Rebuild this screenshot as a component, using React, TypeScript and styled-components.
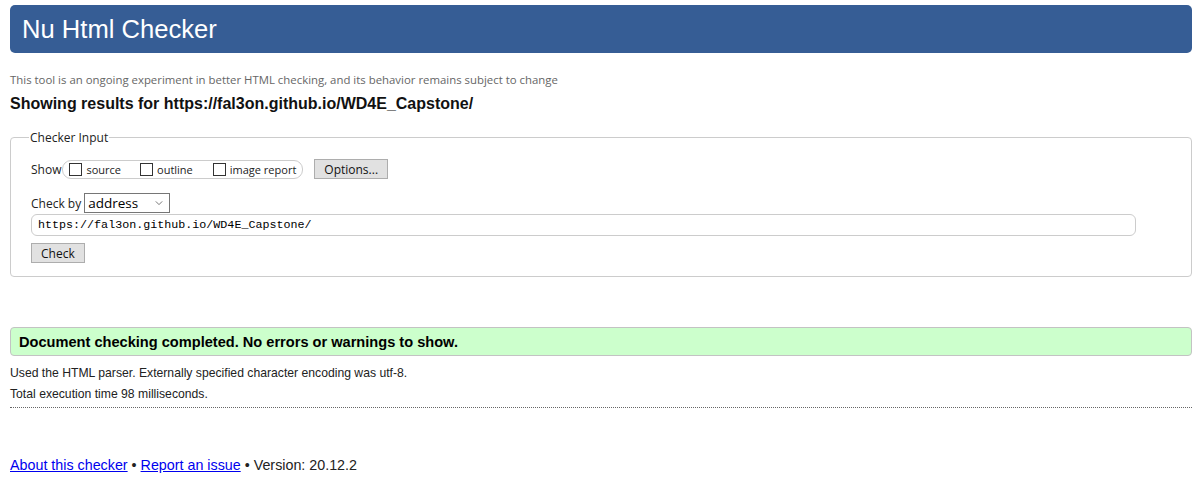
import React from 'react';
import styled, { createGlobalStyle } from 'styled-components';

const GlobalStyle = createGlobalStyle`
  html, body {
    margin: 0;
    padding: 0;
    background: #fff;
  }
  body {
    font-family: "Liberation Sans", Arial, sans-serif;
    color: #000;
  }
`;

const uiFont = `"Open Sans", "Noto Sans", sans-serif`;

const Page = styled.div`
  padding: 5px 10px 0;
`;

const Header = styled.h1`
  margin: 0;
  height: 48px;
  line-height: 48px;
  padding: 0 12px;
  background: #365d95;
  color: #fff;
  border-radius: 5px;
  font-family: "Liberation Sans", Arial, sans-serif;
  font-size: 25.6px;
  font-weight: normal;
`;

const Notice = styled.p`
  margin: 19px 0 0;
  font-family: ${uiFont};
  font-size: 11.4px;
  line-height: 15px;
  color: #666;
`;

const ResultsFor = styled.h2`
  margin: 8px 0 0;
  font-size: 16px;
  line-height: 18px;
  font-weight: bold;
  color: #111;
`;

const Fieldset = styled.fieldset`
  margin: 16px 0 0;
  padding: 8px 20px 13px;
  border: 1px solid #ccc;
  border-radius: 4px;
`;

const Legend = styled.legend`
  margin-left: -2px;
  padding: 0 1px;
  font-family: ${uiFont};
  font-size: 12px;
  color: #222;
`;

const Row = styled.div<{ $mt?: number }>`
  display: flex;
  align-items: center;
  margin-top: ${({ $mt }) => $mt ?? 0}px;
  font-family: ${uiFont};
  font-size: 12px;
  color: #222;
`;

const Pill = styled.div`
  display: flex;
  align-items: center;
  height: 17px;
  margin-left: 1px;
  padding: 0 6px 0 6px;
  border: 1px solid #ccc;
  border-radius: 9px;
`;

const Option = styled.label<{ $gap: number }>`
  display: flex;
  align-items: center;
  margin-right: ${({ $gap }) => $gap}px;
  font-size: 11px;
`;

const Box = styled.input.attrs({ type: 'checkbox' })`
  appearance: none;
  width: 13px;
  height: 13px;
  margin: 0 4px 0 0;
  border: 1px solid #333;
  background: #fff;
  box-sizing: border-box;
`;

const Button = styled.button<{ $ml?: number }>`
  height: 20px;
  margin-left: ${({ $ml }) => $ml ?? 0}px;
  padding: 0 9px;
  background: #e1e1e1;
  border: 1px solid #adadad;
  border-radius: 0;
  font-family: ${uiFont};
  font-size: 12px;
  color: #111;
  box-sizing: border-box;
`;

const SelectBox = styled.div`
  display: flex;
  align-items: center;
  width: 86px;
  height: 20px;
  margin-left: 3px;
  border: 1px solid #767676;
  box-sizing: border-box;
  background: #fff;
`;

const Select = styled.select`
  appearance: none;
  flex: 1;
  border: none;
  background: transparent;
  padding: 0 0 0 3px;
  font-family: ${uiFont};
  font-size: 13.5px;
  color: #000;
  outline: none;
`;

const UrlInput = styled.input`
  display: block;
  width: 1105px;
  height: 22px;
  margin-top: 1px;
  padding: 0 6px;
  border: 1px solid #ccc;
  border-radius: 6px;
  box-sizing: border-box;
  font-family: "Liberation Mono", "DejaVu Sans Mono", monospace;
  font-size: 11.7px;
  color: #000;
`;

const CheckButton = styled(Button)`
  display: block;
  margin-top: 7px;
`;

const Success = styled.p`
  margin: 50px 0 0;
  height: 29px;
  line-height: 29px;
  padding: 0 8px;
  background: #ccffcc;
  border: 1px solid #c3c3c3;
  border-radius: 4px;
  box-sizing: border-box;
  font-size: 14.6px;
  font-weight: bold;
  color: #000;
`;

const Detail = styled.p<{ $mt: number }>`
  margin: ${({ $mt }) => $mt}px 0 0;
  font-size: 12.2px;
  line-height: 14px;
  color: #222;
`;

const Rule = styled.hr`
  margin: 6px 0 0;
  border: none;
  border-top: 1px dotted #666;
`;

const Footer = styled.p`
  margin: 49px 0 0;
  font-size: 14.3px;
  line-height: 16px;
  color: #222;
`;

const Link = styled.a`
  color: #0000ee;
  text-decoration: underline;
`;

const Chevron = () => (
  <svg width="10" height="6" viewBox="0 0 10 6" style={{ marginRight: 6 }}>
    <path d="M1 1l4 4 4-4" fill="none" stroke="#555" strokeWidth="1" />
  </svg>
);

const App: React.FC = () => {
  const url = 'https://fal3on.github.io/WD4E_Capstone/';
  return (
    <Page>
      <GlobalStyle />
      <Header>Nu Html Checker</Header>
      <Notice>
        This tool is an ongoing experiment in better HTML checking, and its behavior remains subject to change
      </Notice>
      <ResultsFor>Showing results for {url}</ResultsFor>
      <Fieldset>
        <Legend>Checker Input</Legend>
        <Row $mt={5}>
          Show
          <Pill>
            <Option $gap={19}>
              <Box />
              source
            </Option>
            <Option $gap={20}>
              <Box />
              outline
            </Option>
            <Option $gap={0}>
              <Box />
              image report
            </Option>
          </Pill>
          <Button $ml={11}>Options...</Button>
        </Row>
        <Row $mt={14}>
          Check by
          <SelectBox>
            <Select defaultValue="address">
              <option value="address">address</option>
              <option value="file">file upload</option>
              <option value="text">text input</option>
            </Select>
            <Chevron />
          </SelectBox>
        </Row>
        <UrlInput defaultValue={url} />
        <CheckButton>Check</CheckButton>
      </Fieldset>
      <Success>Document checking completed. No errors or warnings to show.</Success>
      <Detail $mt={10}>Used the HTML parser. Externally specified character encoding was utf-8.</Detail>
      <Detail $mt={7}>Total execution time 98 milliseconds.</Detail>
      <Rule />
      <Footer>
        <Link href="#about">About this checker</Link> • <Link href="#issue">Report an issue</Link> • Version: 20.12.2
      </Footer>
    </Page>
  );
};

export default App;
